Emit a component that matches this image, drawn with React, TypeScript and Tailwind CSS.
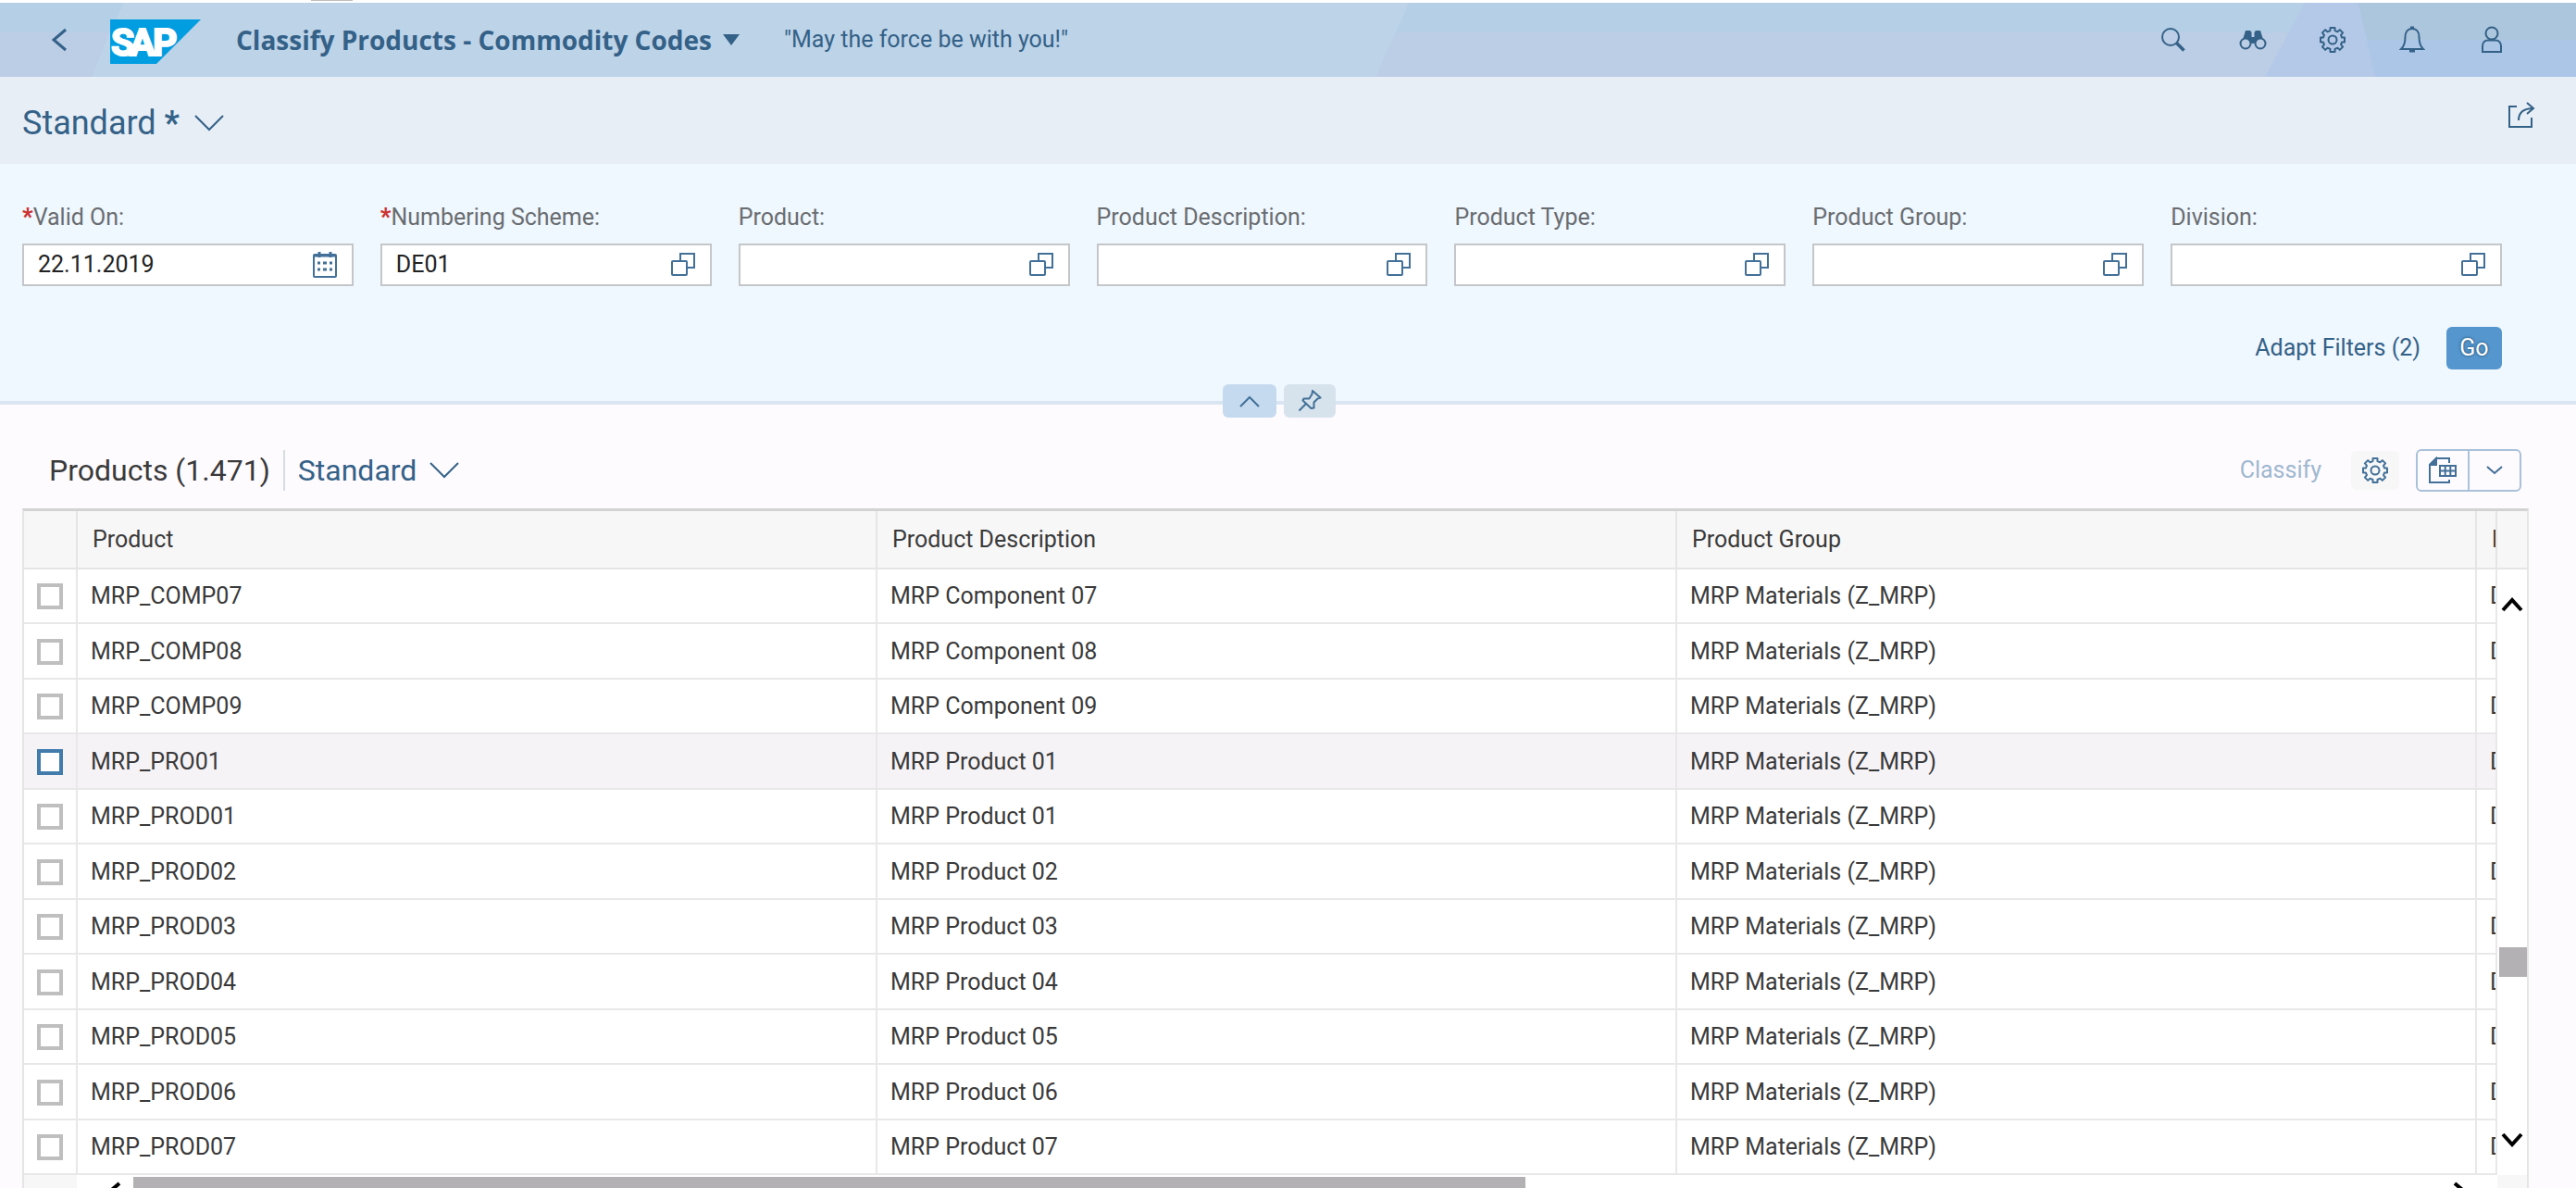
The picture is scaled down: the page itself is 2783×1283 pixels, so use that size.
import React from "react";

const FILTERS = [
  { id: "valid-on", label: "Valid On:", value: "22.11.2019", required: true, date: true },
  { id: "scheme", label: "Numbering Scheme:", value: "DE01", required: true },
  { id: "product", label: "Product:", value: "" },
  { id: "description", label: "Product Description:", value: "" },
  { id: "type", label: "Product Type:", value: "" },
  { id: "group", label: "Product Group:", value: "" },
  { id: "division", label: "Division:", value: "" },
];

const ROWS = [
  ["MRP_COMP07", "MRP Component 07"],
  ["MRP_COMP08", "MRP Component 08"],
  ["MRP_COMP09", "MRP Component 09"],
  ["MRP_PRO01", "MRP Product 01"],
  ["MRP_PROD01", "MRP Product 01"],
  ["MRP_PROD02", "MRP Product 02"],
  ["MRP_PROD03", "MRP Product 03"],
  ["MRP_PROD04", "MRP Product 04"],
  ["MRP_PROD05", "MRP Product 05"],
  ["MRP_PROD06", "MRP Product 06"],
  ["MRP_PROD07", "MRP Product 07"],
];

type ChevronProps = { d: string; w: number; h: number; sw?: number };

function Chevron({ d, w, h, sw = 2 }: ChevronProps) {
  return (
    <svg width={w} height={h} viewBox={`0 0 ${w} ${h}`} fill="none" stroke="currentColor" strokeWidth={sw} aria-hidden="true">
      <path d={d} />
    </svg>
  );
}

function SearchIcon() {
  return (
    <svg width="28" height="28" viewBox="0 0 28 28" fill="none" stroke="currentColor" aria-hidden="true">
      <circle cx="11" cy="11" r="9" strokeWidth="2" />
      <path d="M17.5 17.5l8 8" strokeWidth="3.5" />
    </svg>
  );
}

function BinocularsIcon() {
  return (
    <svg width="30" height="28" viewBox="0 0 30 28" aria-hidden="true">
      <path d="M7 4h5l1.5 2v5h3V6L18 4h5l4 13-6-2-5 3h-2l-5-3-6 2z" fill="currentColor" />
      <circle cx="7" cy="18" r="5.5" fill="#bccde6" stroke="currentColor" strokeWidth="2" />
      <circle cx="23" cy="18" r="5.5" fill="#bccde6" stroke="currentColor" strokeWidth="2" />
    </svg>
  );
}

const TEETH =
  "M12.5 2h5v3l3 1.3 2.3-2.2 3.3 3.3-2.1 2.5 1.1 2.6H28v5h-2.9L24 20.1l2.1 2.5-3.3 3.3-2.3-2.2-3 1.3v3h-5v-3l-3-1.3-2.3 2.2-3.3-3.3L6 20.1l-1.1-2.6H2v-5h2.9L6 9.9 3.9 7.4l3.3-3.3 2.3 2.2 3-1.3z";

function GearIcon() {
  return (
    <svg width="30" height="30" viewBox="0 0 30 30" fill="none" stroke="currentColor" strokeWidth="2" strokeLinejoin="round" aria-hidden="true">
      <path d={TEETH} />
      <circle cx="15" cy="15" r="4.5" />
    </svg>
  );
}

function BellIcon() {
  return (
    <svg width="28" height="30" viewBox="0 0 28 30" fill="none" stroke="currentColor" strokeWidth="2" aria-hidden="true">
      <path d="M14 3c-5 0-7.500 4-7.500 9 0 7-1 10-4.500 13h24c-3.500-3-4.500-6-4.500-13 0-5-2.500-9-7.500-9z" />
      <path d="M11 27h6M12 2h4" strokeWidth="3" />
    </svg>
  );
}

function PersonIcon() {
  return (
    <svg width="24" height="30" viewBox="0 0 24 30" fill="none" stroke="currentColor" strokeWidth="2" aria-hidden="true">
      <circle cx="12" cy="8" r="6.500" />
      <path d="M8 15.500h8c4 0 6 3 6 6.500v6H2v-6c0-3.500 2-6.500 6-6.500z" />
    </svg>
  );
}

function ShareIcon() {
  return (
    <svg width="30" height="30" viewBox="0 0 30 30" fill="none" stroke="currentColor" strokeWidth="2" aria-hidden="true">
      <path d="M10 6H2v22h24V18" />
      <path d="M12 21C12 13 17 8 28 8M21 2l7 6-7 6" />
    </svg>
  );
}

function CalendarIcon() {
  return (
    <svg width="26" height="30" viewBox="0 0 26 30" fill="none" stroke="currentColor" strokeWidth="2" aria-hidden="true">
      <rect x="1" y="4" width="24" height="24" rx="1" />
      <path d="M1 5h24" strokeWidth="3" />
      <path d="M7 1v6M19 1v6" strokeWidth="3" />
      <path d="M5 13h3M11 13h4M18 13h3M5 20h3M11 20h4M18 20h3" strokeWidth="3" />
    </svg>
  );
}

function ValueHelpIcon() {
  return (
    <svg width="26" height="26" viewBox="0 0 26 26" fill="none" stroke="currentColor" strokeWidth="2" aria-hidden="true">
      <path d="M10 9V1h15v15h-7" />
      <rect x="1" y="9" width="16" height="15" rx="1" />
    </svg>
  );
}

function PinIcon() {
  return (
    <svg width="26" height="24" viewBox="0 0 26 24" fill="none" stroke="currentColor" strokeWidth="2" aria-hidden="true">
      <path d="M16 1l8.500 7.500-3 1-4 4v6l-3 .5-9-8.500 1-2h6l3-5z" strokeLinejoin="round" />
      <path d="M9.500 14.500l-8 8" />
    </svg>
  );
}

function ExportIcon() {
  return (
    <svg width="30" height="30" viewBox="0 0 30 30" fill="none" stroke="currentColor" strokeWidth="2" aria-hidden="true">
      <path d="M22 7V2H8L1 9v19h21v-3" />
      <path d="M8 2v7H1z" fill="currentColor" />
      <path d="M12 10h17v11H12zM12 15.500h17M17.700 10v11M23.300 10v11" />
    </svg>
  );
}

function SapLogo() {
  return (
    <svg className="mt-1" width="98" height="48" viewBox="0 0 98 48" role="img" aria-label="SAP">
      <path d="M0 0h98L50 48H0z" fill="#009de0" />
      <g fill="#fff" stroke="#fff" strokeWidth="2" fontFamily="Roboto, sans-serif" fontWeight="700" fontSize="41">
        <text x="1" y="39">S</text>
        <text x="21" y="39">A</text>
        <text x="46" y="39">P</text>
      </g>
    </svg>
  );
}

function ShellPattern() {
  return (
    <svg className="absolute inset-0 h-full w-full" viewBox="0 0 2783 80" preserveAspectRatio="none" aria-hidden="true">
      <path d="M0 0h134l-16 32H0z" fill="#b4cfe6" />
      <path d="M0 32h118L99 80H0z" fill="#bccde6" />
      <path d="M1522 0h972v32H1508z" fill="#b4cfe6" />
      <path d="M1508 32h992v48H1486z" fill="#bccde6" />
      <path d="M2490 0h64l20 80h-127z" fill="#b4c9e8" />
      <path d="M2548 0h235v80h-217z" fill="#abc6e6" />
      <path d="M2548 0h235v40h-226z" fill="#acc6de" />
    </svg>
  );
}

const SHELL_ACTIONS = [
  { label: "Search", icon: <SearchIcon /> },
  { label: "Find", icon: <BinocularsIcon /> },
  { label: "Settings", icon: <GearIcon /> },
  { label: "Notifications", icon: <BellIcon /> },
  { label: "User", icon: <PersonIcon /> },
];

export default function App() {
  return (
    <div className="h-screen overflow-hidden bg-[#fefbff] font-['Roboto',sans-serif] text-[25px] leading-[30px] text-[#3a3a3a]">
      <div className="h-[3px] bg-white pl-[336px]">
        <div className="h-px w-[45px] bg-[#bdbdbd]" />
      </div>
      <header className="relative flex h-20 items-center bg-[#bdd3e8] text-[#346187]">
        <ShellPattern />
        <div className="relative flex w-full items-center pr-12 pl-[43px]">
          <button aria-label="Back" className="flex w-[76px] pl-3">
            <Chevron w={18} h={26} d="M16 2L3 13l13 11" sw={3} />
          </button>
          <SapLogo />
          <button className="ml-[38px] flex items-center gap-3 font-['Open_Sans',sans-serif] text-[28px] font-bold">
            Classify Products - Commodity Codes
            <svg width="18" height="12" viewBox="0 0 18 12" aria-hidden="true">
              <path d="M0 0h18L9 12z" fill="currentColor" />
            </svg>
          </button>
          <span className="ml-12">"May the force be with you!"</span>
          <div className="ml-auto flex">
            {SHELL_ACTIONS.map((a) => (
              <button key={a.label} aria-label={a.label} className="flex w-[86px] items-center justify-center">
                {a.icon}
              </button>
            ))}
          </div>
        </div>
      </header>

      <div className="flex h-[94px] items-center justify-between bg-[#e7eef6] pr-11 pl-6 text-[#346187]">
        <button className="flex items-center gap-4 pt-[6px] text-[36px] leading-[40px]">
          <span>
            Standard <b>*</b>
          </span>
          <Chevron w={32} h={18} d="M1 1l15 15L31 1" />
        </button>
        <button aria-label="Share" className="mb-3">
          <ShareIcon />
        </button>
      </div>

      <section className="relative border-b-4 border-[#dae5f2] bg-[#eff7ff] pt-[43px] pb-[34px]">
        <div className="grid grid-cols-7 gap-[29px] pr-20 pl-6">
          {FILTERS.map((f) => (
            <div key={f.id} className="flex flex-col gap-[13px]">
              <label htmlFor={f.id} className="whitespace-nowrap text-[#6a6d70]">
                {f.required && <span className="font-black text-[#cc3333]">*</span>}
                {f.label}
              </label>
              <div className="flex h-[46px] items-center border-2 border-[#c4c6c8] bg-white pr-4 pl-[15px]">
                <input id={f.id} defaultValue={f.value} className="min-w-0 flex-1 bg-transparent text-[#222] outline-none" />
                <button aria-label={`Open ${f.label}`} className="text-[#427098]">
                  {f.date ? <CalendarIcon /> : <ValueHelpIcon />}
                </button>
              </div>
            </div>
          ))}
        </div>
        <div className="mt-11 flex items-center justify-end gap-7 pr-20">
          <button className="text-[#346187]">Adapt Filters (2)</button>
          <button className="h-[46px] w-[60px] rounded-md bg-[#5496cd] text-white [text-shadow:0_0_3px_#1f3f5f]">Go</button>
        </div>
        <div className="absolute inset-x-0 -bottom-[18px] flex justify-center gap-2 pr-5 text-[#427098]">
          <button aria-label="Collapse header" className="flex h-9 w-[58px] items-center justify-center rounded-md bg-[#c5daef]">
            <Chevron w={22} h={13} d="M1 12L11 2l10 10" />
          </button>
          <button aria-label="Pin header" className="flex h-9 w-14 items-center justify-center rounded-md bg-[#d6e2ec]">
            <PinIcon />
          </button>
        </div>
      </section>

      <div className="flex h-28 items-center pt-9 pr-[59px] pb-[6px] pl-[53px]">
        <h2 className="text-[32px] leading-[40px]">Products (1.471)</h2>
        <div className="mr-[14px] ml-[14px] h-11 w-[2px] bg-[#d5dde3]" />
        <button className="flex items-center gap-[14px] text-[32px] leading-[40px] text-[#346187]">
          Standard
          <Chevron w={32} h={18} d="M1 1l15 15L31 1" />
        </button>
        <div className="ml-auto flex items-center">
          <button disabled className="text-[#9fb8cf]">Classify</button>
          <button aria-label="Table settings" className="ml-8 flex h-[42px] w-[52px] items-center justify-center rounded-md bg-[#f7f7f7] text-[#427098]">
            <GearIcon />
          </button>
          <div className="ml-[18px] flex h-[46px] w-[114px] rounded-md border-2 border-[#a9c1d9] text-[#427098]">
            <button aria-label="Export" className="flex flex-1 items-center justify-center border-r-2 border-[#a9c1d9]">
              <ExportIcon />
            </button>
            <button aria-label="Export options" className="flex flex-1 items-center justify-center">
              <Chevron w={18} h={10} d="M1 1l8 7 8-7" />
            </button>
          </div>
        </div>
      </div>

      <div className="mr-[51px] ml-6 border-t-[3px] border-r-2 border-l-2 border-t-[#d3d3d3] border-r-[#e5e5e5] border-l-[#e5e5e5] bg-white">
        <div className="flex">
          <div className="min-w-0 flex-1">
            <table className="w-full table-fixed border-separate border-spacing-0 text-left">
              <colgroup>
                <col className="w-[58px]" />
                <col />
                <col />
                <col />
                <col className="w-[22px]" />
              </colgroup>
              <thead>
                <tr className="h-[63px] bg-[#f7f7f7] *:overflow-hidden *:border-r-2 *:border-b-2 *:border-[#e5e5e5] *:p-0 *:pl-4 *:font-normal">
                  <th aria-label="Select" />
                  <th>Product</th>
                  <th>Product Description</th>
                  <th>Product Group</th>
                  <th>Division</th>
                </tr>
              </thead>
              <tbody>
                {ROWS.map(([id, desc], i) => (
                  <tr
                    key={id}
                    className={
                      "h-[59px] even:h-[60px] *:overflow-hidden *:whitespace-nowrap *:border-r-2 *:border-b-2 *:border-[#e8e8e8] *:p-0 *:pt-px *:pl-[14px] " +
                      (i === 3 ? "bg-[#f6f3f7]" : "bg-white")
                    }
                  >
                    <td>
                      <input
                        type="checkbox"
                        aria-label={`Select ${id}`}
                        className={
                          "block size-7 appearance-none border-4 bg-white " + (i === 3 ? "border-[#427cac]" : "border-[#bfbfbf]")
                        }
                      />
                    </td>
                    <td>{id}</td>
                    <td>{desc}</td>
                    <td>MRP Materials (Z_MRP)</td>
                    <td>D</td>
                  </tr>
                ))}
              </tbody>
            </table>
          </div>
          <div className="flex w-8 flex-col">
            <div className="h-[63px] border-b-2 border-[#e5e5e5] bg-[#f7f7f7]" />
            <div className="flex flex-1 flex-col items-center pt-7 pb-7">
              <button aria-label="Scroll up" className="text-black">
                <Chevron w={24} h={18} d="M2 16L12 5l10 11" sw={4} />
              </button>
              <div className="flex w-full flex-1 flex-col pt-[362px] pl-[2px]">
                <div className="h-8 bg-[#b4b1b5]" />
              </div>
              <button aria-label="Scroll down" className="text-black">
                <Chevron w={24} h={18} d="M2 2l10 11L22 2" sw={4} />
              </button>
            </div>
          </div>
        </div>
        <div className="flex h-14">
          <div className="w-[57px] bg-[#f7f7f7]" />
          <div className="flex flex-1 items-start pt-[2px]">
            <button aria-label="Scroll left" className="w-[61px] pt-[5px] pl-7 text-black">
              <Chevron w={20} h={24} d="M18 2L6 12l12 10" sw={4} />
            </button>
            <div className="flex-1">
              <div className="h-8 w-[60%] bg-[#b4b1b5]" />
            </div>
            <button aria-label="Scroll right" className="w-12 pt-[5px] text-black">
              <Chevron w={20} h={24} d="M2 2l12 10L2 22" sw={4} />
            </button>
          </div>
          <div className="w-8 bg-[#f7f7f7]" />
        </div>
      </div>
    </div>
  );
}
